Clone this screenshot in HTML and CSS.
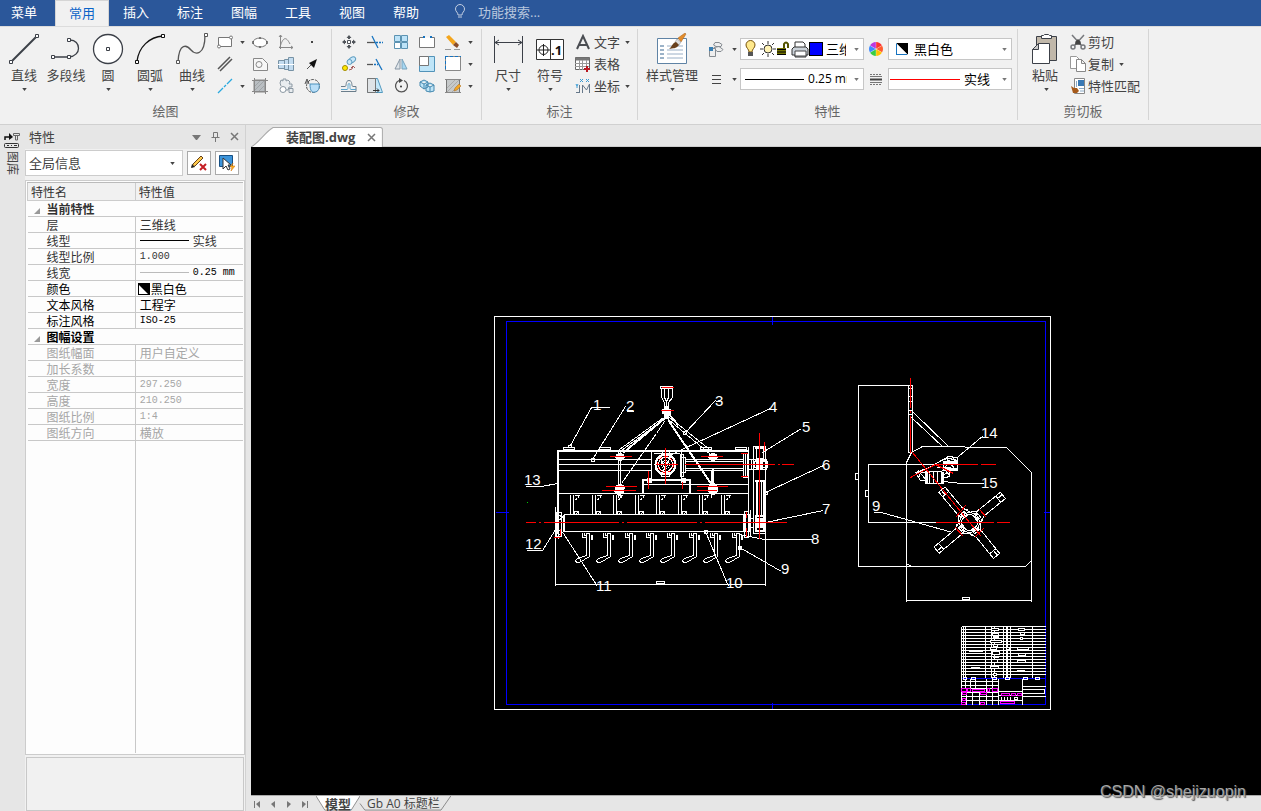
FILE: index.html
```html
<!DOCTYPE html>
<html lang="zh-CN">
<head>
<meta charset="utf-8">
<title>装配图.dwg</title>
<link rel="stylesheet" href="styles.css">
</head>
<body>
<svg class="defs" aria-hidden="true">
  <symbol id="caret" viewBox="0 0 6 4"><path d="M0 0h6L3 4z"/></symbol>
  <symbol id="bw" viewBox="0 0 12 12"><path d="M0 0h12v12z" fill="#000"/><path d="M0 0v12h12z" fill="#fff"/><path d="M.5 12V.5M0 11.500h11" fill="none" stroke="#1673c0"/></symbol>
</svg>

<nav class="menu">
  <button class="first">菜单</button><button class="active">常用</button><button>插入</button><button>标注</button><button>图幅</button><button>工具</button><button>视图</button><button>帮助</button>
  <label class="search">
    <svg width="12" height="16" viewBox="0 0 12 16" fill="none" stroke="#c3cfe2"><path d="M4 11C4 8 1.500 8 1.500 5a4.500 4.500 0 0 1 9 0C10.500 8 8 8 8 11zM4 13h4"/></svg>
    <input type="text" placeholder="功能搜索..." aria-label="功能搜索">
  </label>
</nav>

<header class="ribbon">
  <section class="group">
    <div class="tools draw">
      <div class="bigs">
        <button class="big"><svg viewBox="0 0 32 32" fill="none" stroke="#3c4048"><path d="M4 28 28 4" stroke-width="2"/><path d="M1.500 27.500h3v3h-3zM27.500 1.500h3v3h-3z" fill="#fff"/></svg>直线<svg class="caret"><use href="#caret"/></svg></button>
        <button class="big"><svg viewBox="0 0 32 32" fill="none" stroke="#3c4048"><path d="M3 24h16c13-1 12-17 1-17" stroke-width="1.300"/><path d="M1.500 22.500h3v3h-3zM17.500 22.500h3v3h-3zM17.500 5.500h3v3h-3z" fill="#fff"/></svg>多段线</button>
        <button class="big"><svg viewBox="0 0 32 32" fill="#fff" stroke="#3c4048"><circle cx="16" cy="16" r="14.500" stroke-width="1.300"/><path d="M14.500 14.500h3v3h-3z"/></svg>圆<svg class="caret"><use href="#caret"/></svg></button>
        <button class="big"><svg viewBox="0 0 32 32" fill="none" stroke="#111"><path d="M3 28C5 14 15 4 29 3" stroke-width="1.300"/><path d="M1.500 27.500h3v3h-3zM27.500 1.500h3v3h-3z" fill="#fff"/></svg>圆弧<svg class="caret"><use href="#caret"/></svg></button>
        <button class="big"><svg viewBox="0 0 32 32" fill="none" stroke="#555"><path d="M2 29C3 9 11 12 15 17s14 6 14-15" stroke-width="1.300"/><path d="M.5 27.500h3v3h-3zM28.500.5h3v3h-3z" fill="#fff"/></svg>曲线<svg class="caret"><use href="#caret"/></svg></button>
      </div>
      <div class="smalls draw-grid">
        <button aria-label="矩形"><svg viewBox="0 0 16 16" fill="#fff" stroke="#777"><path d="M1.500 3.500h13v9h-13z"/><circle cx="14" cy="3.500" r="1.500"/><circle cx="2" cy="12.500" r="1.500"/></svg><svg class="caret"><use href="#caret"/></svg></button>
        <button aria-label="椭圆"><svg viewBox="0 0 16 16" fill="#fff" stroke="#777"><ellipse cx="8" cy="8.500" rx="7" ry="4.500"/><path d="M1 7v3M15 7v3M7 4h2M7 13h2" stroke="#333"/></svg></button>
        <button aria-label="公式曲线"><svg viewBox="0 0 16 16" fill="none" stroke="#888"><path d="M2.500 1v14M1 13.500h14M1 3l1.500-2L4 3M13 12l2 1.500-2 1.500M2 13C5 3 8 2 12 10"/></svg></button>
        <button aria-label="点"><svg viewBox="0 0 16 16"><path d="M7 7h2v2H7z" fill="#444"/></svg></button>
        <button aria-label="平行线"><svg viewBox="0 0 16 16" stroke="#555" stroke-width="1.500"><path d="M1 13 13 1M3 15 15 3"/></svg></button>
        <button aria-label="孔"><svg viewBox="0 0 16 16" fill="#f7f7f7" stroke="#888"><path d="M1.500 2.500h9l5 5v7h-14z"/><circle cx="7" cy="8.500" r="3"/></svg></button>
        <button aria-label="轴"><svg viewBox="0 0 16 16" fill="#c3dcf0" stroke="#7792a5"><path d="M.5 4.500h6v8h-6zM6.500 3.500h4v10h-4zM10.500 1.500h5v13h-5z"/><path d="M0 8.500h16" stroke="#fff"/></svg></button>
        <button aria-label="箭头"><svg viewBox="0 0 16 16"><path d="m3 13 6-6" stroke="#555" fill="none"/><path d="m13 3-3 9-5-5z" fill="#111"/></svg></button>
        <button aria-label="构造线"><svg viewBox="0 0 16 16" stroke="#29a9df" stroke-width="1.300"><path d="m1 15 5-5M7 9l2-2M10 6l5-5"/></svg><svg class="caret"><use href="#caret"/></svg></button>
        <button aria-label="剖面线"><svg viewBox="0 0 16 16" fill="none" stroke="#888"><path d="M2 2h11v12H2z" fill="#b9bec2"/><path d="M2.500 0v16M13.500 0v16M0 2.500h16M0 13.500h16"/><path d="M3 8l5-5M3 12l9-9M7 13l6-6" stroke="#a0a5a8"/></svg></button>
        <button aria-label="块"><svg viewBox="0 0 16 16" fill="#e9edf0" stroke="#8b98a3"><path d="m2 5 1-3 2 1V1h3v2l2-1 2 2-1 2h3v3h-3l-1 3H8M2 5l1 3"/><circle cx="5" cy="11.500" r="3" fill="#fff"/><path d="M11 10.500h4v4h-4z"/></svg></button>
        <button aria-label="局部放大"><svg viewBox="0 0 16 16" fill="none" stroke="#555"><circle cx="9" cy="8" r="6.500" stroke-dasharray="3 1"/><path d="M6 6h9c1 4-1 8-4 8-3 1-5-1-5-8z" fill="#b9def7" stroke="#4c91bd"/><path d="m1 6 2-5 2 5M2 4h3"/></svg></button>
      </div>
    </div>
    <h2>绘图</h2>
  </section>

  <section class="group">
    <div class="tools modify">
      <div class="smalls modify-grid">
        <button aria-label="平移"><svg viewBox="0 0 16 16" fill="#50545a"><path d="m8 1 2.500 3h-5zM8 15l2.500-3h-5zM1 8l3-2.500v5zM15 8l-3-2.500v5zM7 4h2v1H7zM7 11h2v1H7zM4 7h1v2H4zM11 7h1v2h-1z"/><path d="M6.500 6.500h3v3h-3z" fill="#fff" stroke="#50545a"/></svg></button>
        <button aria-label="裁剪"><svg viewBox="0 0 16 16" fill="none" stroke-width="1.300"><path d="M0 8.500h8" stroke="#555"/><path d="M9 8.500h7" stroke="#1673c0" stroke-dasharray="2 1"/><path d="m5 2 6 12" stroke="#1673c0"/></svg></button>
        <button aria-label="阵列"><svg viewBox="0 0 16 16" fill="#bde3f8" stroke="#5c93b2"><path d="M1.500 1.500h6v6h-6zM8.500 1.500h6v6h-6zM8.500 8.500h6v6h-6z"/><path d="M1.500 8.500h6v6h-6z" fill="#fff"/></svg></button>
        <button aria-label="打断"><svg viewBox="0 0 16 16" fill="#fff" stroke="#777"><path d="M5 3.500H.5v10h15v-10H11"/><path d="M4 2h2v2H4zM11 2h2v2h-2z" fill="#1673c0" stroke="none"/></svg></button>
        <button aria-label="删除"><svg viewBox="0 0 16 16"><path d="m1 3 3-2 7 7-3 3z" fill="#f4a51c"/><path d="m8 11 3-3 3 3-2 3z" fill="#8b4d28"/><path d="M0 15.500h6M9 15.500h6" stroke="#999"/></svg><svg class="caret"><use href="#caret"/></svg></button>
        <button aria-label="复制图形"><svg viewBox="0 0 16 16" fill="none"><ellipse cx="11" cy="4" rx="4" ry="2.500" transform="rotate(-35 11 4)" fill="#c9e8fa" stroke="#5c9cc0"/><circle cx="8.500" cy="6" r="2.500" fill="#c9e8fa" stroke="#5c9cc0"/><circle cx="4" cy="12" r="2.500" fill="#ffe900" stroke="#a28c00"/><path d="M8 14q4 0 4-4m-2 2 2-2 2 2" stroke="#a55c5c"/></svg></button>
        <button aria-label="延伸"><svg viewBox="0 0 16 16" fill="none" stroke-width="1.300"><path d="M0 8.500h6" stroke="#555"/><path d="M7 8.500h4" stroke="#1673c0" stroke-dasharray="2 1"/><path d="m9 3 6 11" stroke="#1673c0"/></svg></button>
        <button aria-label="镜像"><svg viewBox="0 0 16 16"><path d="M7 3v10H2z" fill="#dfe5ea" stroke="#8796a5"/><path d="M9 3v10h5z" fill="#a6d7f3" stroke="#7aa3bb"/></svg></button>
        <button aria-label="缩放"><svg viewBox="0 0 16 16" stroke="#5293b9"><path d="M.5.5h15v15H.5z" fill="#bfe5f8"/><path d="M.5.5h9v9h-9z" fill="#fff" stroke="#777"/></svg></button>
        <button aria-label="拉伸"><svg viewBox="0 0 16 16" fill="#fff"><path d="M.5.5h15v14H.5z" stroke="#888"/><path d="M0 .5h16M.5 0v15" stroke="#1673c0" stroke-dasharray="3 2"/></svg><svg class="caret"><use href="#caret"/></svg></button>
        <button aria-label="等距线"><svg viewBox="0 0 16 16" fill="none" stroke="#6a7d8b"><path d="M0 8.500h4c2 0 0-6 4-6s2 6 4 6h3v5H0"/><path d="M0 11.500h6c2 0 0-6 2-6s0 6 2 6h5" stroke="#5ba7d0"/></svg></button>
        <button aria-label="拉伸边"><svg viewBox="0 0 16 16"><path d="M.5.500h10l5 14h-15z" fill="#c4e7f9" stroke="#559abf"/><path d="M.5.500h8v14h-8z" fill="#dfe3e6" stroke="#777"/><path d="M6 12.500h6m-2-2 2 2-2 2" fill="none" stroke="#333"/></svg></button>
        <button aria-label="旋转"><svg viewBox="0 0 16 16" fill="none" stroke="#555" stroke-width="1.300"><path d="M6 2.500a6 6 0 1 0 5 0"/><path d="m6 0 4 2.500L6 5z" fill="#444" stroke="none"/><circle cx="8" cy="8.500" r="1" fill="#333" stroke="none"/></svg></button>
        <button aria-label="分解"><svg viewBox="0 0 16 16" fill="#bfe5f8" stroke="#4488af"><path d="m1 4 4-2 4 2v5l-4 2-4-3zM1 4l4 2 4-2M5 6v5M7 7l4-2 4 2v6l-4 1-4-1zM7 7l4 2 4-2M11 9v5"/></svg></button>
        <button aria-label="编辑填充"><svg viewBox="0 0 16 16"><path d="M1.500 1.500h13v13h-13z" fill="#c6c9ca" stroke="#777"/><path d="M0 1.500h16M0 14.500h16" stroke="#888"/><path d="m2 10 8-8M2 14 14 2M7 14l7-7" stroke="#aaa"/><path d="m9 13 1-3 4-4 2 2-4 4z" fill="#f1a526" stroke="#a96a21" stroke-width=".5"/></svg><svg class="caret"><use href="#caret"/></svg></button>
      </div>
    </div>
    <h2>修改</h2>
  </section>

  <section class="group">
    <div class="tools note">
      <div class="bigs">
        <button class="big"><svg viewBox="0 0 32 32" fill="none" stroke="#3c4048"><path d="M2.500 3v27M30.500 3v27M3 9.500h27M7 7 3 9.500 7 12M26 7l4 2.500-4 2.500"/></svg>尺寸<svg class="caret"><use href="#caret"/></svg></button>
        <button class="big"><svg viewBox="0 0 32 32" fill="none" stroke="#222"><path d="M2.500 6.500h27v20h-27zM16.500 6.500v20" fill="#fff" stroke="#333"/><circle cx="9.500" cy="17" r="4.500"/><path d="M3 17h13M9.500 11v12"/><text x="17" y="22" class="icon-text">.1</text></svg>符号<svg class="caret"><use href="#caret"/></svg></button>
      </div>
      <div class="labelled">
        <button><svg viewBox="0 0 16 16" fill="none" stroke="#4a4d52" stroke-width="2"><path d="M2 15 8 2l6 13M4 11h8"/></svg>文字<svg class="caret"><use href="#caret"/></svg></button>
        <button><svg viewBox="0 0 16 16"><path d="M.5 1.500h14v12H.5z" fill="#fff" stroke="#666"/><path d="M.5 1.500h14v3H.5z" fill="#777"/><path d="M0 7.500h14M0 10.500h14M4.500 4v10M7.500 4v10M11.500 4v10" stroke="#999"/><path d="M9 13h6M12 10v6" stroke="#b91922" stroke-width="2"/></svg>表格</button>
        <button><svg viewBox="0 0 16 16" fill="none" stroke="#66788a"><path d="M4.500 7v8M1 14.500h3M7.500 15V7l4 5 3-6v9"/><path d="m5 1 3 3M8 1 5 4M11 1l3 3M14 1l-3 3M1 6l1 2 1-2M2 8v2" stroke="#389bd5"/></svg>坐标<svg class="caret"><use href="#caret"/></svg></button>
      </div>
    </div>
    <h2>标注</h2>
  </section>

  <section class="group">
    <div class="tools props">
      <button class="big wide"><svg viewBox="0 0 32 32"><path d="M1.500 5.500h29v25h-29z" fill="#fff" stroke="#5f83a5"/><path d="M4 13h4M4 17h4M4 21h4M4 25h4" stroke="#386791"/><path d="M11 13h16M11 17h16M11 21h16M11 25h16" stroke="#9aafc6"/><path d="m22 5 7-5 1 1-5 8z" fill="#e28c2b" stroke="#a5601a" stroke-width=".5"/><path d="m21 6 4 3-2 3-4-3z" fill="#ddd" stroke="#888" stroke-width=".5"/><path d="M13 16c3-2 3-6 7-7l3 3c-3 4-6 3-10 4z" fill="#68401c"/></svg>样式管理<svg class="caret"><use href="#caret"/></svg></button>
      <div class="prop-grid">
        <button aria-label="图层"><svg viewBox="0 0 16 16" fill="#eee" stroke="#858b91"><path d="M5.500 4 7 1.500h4l3 2-1 2H8z"/><path d="m6 6.500 5-1 4 3-2 2H9z"/><path d="M1.500 7.500h6v8h-6z"/><path d="M1 6h4v4H1z" fill="#397fb3" stroke="none"/></svg><svg class="caret"><use href="#caret"/></svg></button>
        <div class="combo layer">
          <svg width="64" height="18" viewBox="0 0 64 18"><path d="M4 12C4 9 1 8 1 5a4.500 4.500 0 0 1 9 0c0 3-3 4-3 7z" fill="#ffe98c" stroke="#77520c"/><path d="M3 12h5v4H3z" fill="#555"/><circle cx="23" cy="9" r="4" fill="#fff3b5" stroke="#333"/><path d="M23 1v3M23 14v3M15 9h3M28 9h3M17 3l2 2M27 13l2 2M29 3l-2 2M19 13l-2 2" stroke="#333"/><path d="M32 8h9v7h-9z" fill="#737300"/><path d="M32 9.500h9M32 12h9M32 14.500h9" stroke="#000"/><path d="M39 8V4q2-3 4 0v4" stroke="#555500" stroke-width="2" fill="none"/><path d="M50 7V2h8l2 2v3" fill="#fff" stroke="#333"/><path d="m49 7-2 2v6h3v2h11v-2h2V9l-2-2z" fill="#cbd2d9" stroke="#333"/><path d="M50 11h11v5H50z" fill="#fff" stroke="#444"/></svg>
          <span class="swatch"></span>
          <select class="clipped" aria-label="图层"><option>三维线</option></select><svg class="caret"><use href="#caret"/></svg>
        </div>
        <svg class="wheel" viewBox="0 0 16 16"><path d="M8 8V1a7 7 0 0 1 6 3.500z" fill="#f33"/><path d="m8 8 6-3.500a7 7 0 0 1 0 7z" fill="#ff5c2e"/><path d="m8 8 6 3.500A7 7 0 0 1 8 15z" fill="#ffc400"/><path d="M8 8v7a7 7 0 0 1-6-3.500z" fill="#39cd42"/><path d="m8 8-6 3.500a7 7 0 0 1 0-7z" fill="#3d8aff"/><path d="M8 8 2 4.500A7 7 0 0 1 8 1z" fill="#bd38df"/><path d="M8 1v14M2 4.500l12 7M14 4.500l-12 7" stroke="#fff" stroke-width=".3"/></svg>
        <div class="combo spaced"><svg width="12" height="12"><use href="#bw"/></svg><select aria-label="颜色"><option>黑白色</option></select><svg class="caret"><use href="#caret"/></svg></div>
        <button aria-label="线宽"><svg viewBox="0 0 16 16" stroke="#444"><path d="M4 4.500h9M4 8.500h9M4 12.500h9"/></svg><svg class="caret"><use href="#caret"/></svg></button>
        <div class="combo"><span class="line black"></span><select class="weight" aria-label="线宽"><option>0.25 mm</option></select><svg class="caret"><use href="#caret"/></svg></div>
        <svg class="wheel" viewBox="0 0 16 16" stroke="#777" fill="none"><path d="M2 3.500h12M2 13.500h12" stroke-dasharray="2 1"/><path d="M2 5.500h12M2 11.500h12"/><path d="M2 8.500h12" stroke-width="2" stroke="#444"/></svg>
        <div class="combo tight"><span class="line red-line"></span><select class="linetype" aria-label="线型"><option>实线</option></select><svg class="caret"><use href="#caret"/></svg></div>
      </div>
    </div>
    <h2>特性</h2>
  </section>

  <section class="group">
    <div class="tools clip">
      <button class="big"><svg viewBox="0 0 32 32" stroke="#3c4048"><path d="M7.500 3.500h20v24h-20z" fill="#c1b8aa"/><path d="M12.500 5.500v-3h2l1-1h4l1 1h2v3z" fill="#fff"/><path d="M9.500 10.500h11v20h-17v-14z" fill="#fff"/><path d="M9.500 10.500v6h-6z" fill="#ccc"/></svg>粘贴<svg class="caret"><use href="#caret"/></svg></button>
      <div class="labelled">
        <button><svg viewBox="0 0 16 16" fill="none" stroke="#77797d" stroke-width="1.500"><path d="m2 1 10 11M14 1 4 12"/><path d="m6 8 2-2 2 2v2H6z" fill="#444" stroke="#444"/><circle cx="3" cy="13" r="2"/><circle cx="13" cy="13" r="2"/></svg>剪切</button>
        <button><svg viewBox="0 0 16 16" fill="#fff" stroke="#999"><path d="M.5.500h6l3 3v9h-9z"/><path d="M6.500 3.500h5l4 4v8h-9zM11.500 3.500v4h4" stroke="#888"/></svg>复制<svg class="caret"><use href="#caret"/></svg></button>
        <button><svg viewBox="0 0 16 16"><path d="M4.500.5h10v15h-10z" fill="#fff" stroke="#888"/><path d="M8 2h6v6H8z" fill="#3979b5"/><path d="M6.500 3v6M9 10.500h5M10 13h4" stroke="#8baac7"/><path d="m1 8 3 2 3 0 2 3-2 2-4 0z" fill="#a65a1b"/></svg>特性匹配</button>
      </div>
    </div>
    <h2>剪切板</h2>
  </section>
</header>

<main>
  <aside class="strip">
    <button><svg width="16" height="17" viewBox="0 0 16 17" fill="none" stroke="#333"><path d="M1 8V5h6" stroke="#111" stroke-width="1.500"/><path d="m5 1 4 4-4 3z" fill="#111" stroke="none"/><path d="M9.500 1.500h6v2h-6zM11.500 4v4h2V4" stroke="#666"/><rect x=".5" y="11.500" width="14" height="4" rx="1"/><path d="M3 13.500h2M7 13.500h1M10 13.500h3"/></svg><span>图库</span></button>
  </aside>

  <aside class="panel">
    <div class="panel-title"><h1>特性</h1>
      <button aria-label="选项"><svg viewBox="0 0 10 10"><path d="M1 3h9L6 8H5z" fill="#777"/></svg></button>
      <button aria-label="固定"><svg viewBox="0 0 10 10" fill="none" stroke="#777"><path d="M3.500.5h4v5h-4zM1.500 5.500h8M5.500 6v4"/></svg></button>
      <button aria-label="关闭"><svg viewBox="0 0 10 10" stroke="#777" stroke-width="1.500"><path d="m2 1 7 7M9 1 2 8"/></svg></button>
    </div>
    <div class="panel-tools">
      <div class="scope"><select aria-label="对象"><option>全局信息</option></select><svg class="caret"><use href="#caret"/></svg></div>
      <button aria-label="清除选择"><svg viewBox="0 0 16 16"><path d="m1 12 1-3 8-8 2 2-8 8z" fill="#ffc94b" stroke="#654119"/><path d="m0 13 1-4 3 3z" fill="#222"/><path d="m9 9 6 6M15 9l-6 6" stroke="#c51e25" stroke-width="2"/></svg></button>
      <button aria-label="快速选择"><svg viewBox="0 0 16 16"><path d="M.5.500h13v11H.5z" fill="#3c94da" stroke="#174f83"/><path d="M4 3v11l3-3 2 4 2-1-2-4h3z" fill="#fff" stroke="#333"/><path d="m14 8-3 4h2l-1 4 4-5h-3z" fill="#ffb41f" stroke="#d06c00" stroke-width=".5"/></svg></button>
    </div>
    <div class="grid-wrap">
      <table>
        <thead><tr><th>特性名</th><th>特性值</th></tr></thead>
        <tbody>
          <tr class="cat grey"><th colspan="2"><svg viewBox="0 0 6 6"><path d="M6 0v6H0z"/></svg>当前特性</th></tr>
          <tr class="grey"><td>层</td><td>三维线</td></tr>
          <tr class="grey"><td>线型</td><td><div class="val"><i class="sample dark"></i>实线</div></td></tr>
          <tr class="grey"><td>线型比例</td><td class="num">1.000</td></tr>
          <tr class="grey"><td>线宽</td><td><div class="val num strong"><i class="sample"></i>0.25 mm</div></td></tr>
          <tr><td>颜色</td><td class="color"><div class="val"><svg width="12" height="12" viewBox="0 0 12 12"><path d="M0 0h12v12H0z"/><path d="M1 2v9h9z" fill="#fff"/></svg>黑白色</div></td></tr>
          <tr><td>文本风格</td><td>工程字</td></tr>
          <tr><td>标注风格</td><td class="num">ISO-25</td></tr>
          <tr class="cat"><th colspan="2"><svg viewBox="0 0 6 6"><path d="M6 0v6H0z"/></svg>图幅设置</th></tr>
          <tr class="off"><td>图纸幅面</td><td>用户自定义</td></tr>
          <tr class="off"><td>加长系数</td><td></td></tr>
          <tr class="off"><td>宽度</td><td class="num">297.250</td></tr>
          <tr class="off"><td>高度</td><td class="num">210.250</td></tr>
          <tr class="off"><td>图纸比例</td><td class="num">1:4</td></tr>
          <tr class="off"><td>图纸方向</td><td>横放</td></tr>
          <tr class="fill"><td></td><td></td></tr>
        </tbody>
      </table>
    </div>
    <div class="hint"></div>
  </aside>

  <section class="work">
    <div class="doc-tabs">
      <div class="doc-tab"><svg class="edge" viewBox="0 0 132 20" preserveAspectRatio="none"><path d="M0 20C8 16 14 5 22 .500h107q2 0 2 2V20" fill="#fff" stroke="#aaa"/></svg><span>装配图.dwg</span><button aria-label="关闭"><svg viewBox="0 0 10 10" stroke="#777" stroke-width="1.500"><path d="m1 2 7 7M8 2 1 9"/></svg></button></div>
    </div>
    <div class="canvas">
      <svg class="drawing" viewBox="251 147 1010 648" preserveAspectRatio="xMidYMid meet">
        <defs>
          <g id="hanger"><path d="M0 0v20M3 0v20M4 1h5l-2 3-2 1M4 17h4v3H4zM5 20l3-3"/></g>
          <g id="blade"><path d="M-3 1h4M1 0v24l-10 6h-3l-1-2 2-2 9-3V1M-6 0v5h4M-4 0v3h2M3 2v5h1V2"/></g>
          <g id="leg"><path d="M-3-9-4-15V-43H4V-15L7-10M-4-37H4M-1-37V-43M-3-12h6v5h-6z"/><circle r="2" cy="-10"/><path d="M-8-8l4-5M8-8l-3-3"/></g>
          <g id="bolt"><path d="M-3-2h6v4h-6zM-5 0h10M-1-4v8M1-4v8" stroke-width="2"/></g>
        </defs>
        <g transform="translate(.5 .5)" class="wire">
          <g class="blue"><path d="M506 321H1045V704H506zM495 512h13M1043 512h7M772 316v8M772 702v7"/></g>
          <path d="M494 316H1050V709H494z"/>

          <path d="M591 407h18M591 407 570 445M625 406 592 459M626 411h7M525 486h16l16-3M526 550h16l15-24M563 533l34 53M715 400l-30 32M770 408l-82 38-19 9M801 428l-39 24M823 465l-58 27M823 510l-58 12M811 539h-47l-25-5M781 571l-42-24M705 531l23 55M719 401h-4M983 435l-25 21M983 483h-22l-18-2M873 512h8l71 20"/>
          <path d="M591 458h3v3h-3zM683 431h3v3h-3zM704 530h3v3h-3zM738 546h3v3h-3zM763 491h4v3h-4z"/>

          <path d="M557 450H748M557 449V533" stroke-width="2"/>
          <path d="M563 447h11v2h-11zM568 445h3v2h-3zM599 447h11v2h-11zM700 447h11v2h-11zM735 447h11v2h-11z"/>
          <path d="M558 459h93M558 464h93M558 470h93M557 493H748M641 484H748M564 514H745V531H564zM555 506V585M765 446V585M555 584H765M656 581h8v2h-8zM748 446V510"/>
          <path d="M563 514V531" stroke-width="2"/>
          <path d="M642 493V479H689V493" stroke-width="2"/>
          <path d="M651 451h30v28h-30zM653 453h26"/>
          <circle cx="665" cy="464" r="10" stroke-width="2"/><circle cx="665" cy="464" r="7"/><circle cx="665" cy="464" r="4"/><circle cx="665" cy="464" r="2"/>
          <path d="M656 459l4-2 2-5M669 452l2 5 4 2M675 469l-4 2-2 5M661 476l-2-5-4-2M660 457l5 14M670 457l-8 14M661 453h8v4h-8zM661 472h8v4h-8z"/>
          <path d="M680 454h3v22h-3zM683 457v18M685 459h58v11h-58zM685 461h58M685 468h58M743 453h4v24h-4zM745 453v24M680 457h5v15h-5M748 459h5v10h-5"/>

          <path d="M660 386h12v2h-12zM661 388v9l3 5v5M672 388v9l-4 5v5M664 388v9l2 4 2-4v-9M666 401v10"/>
          <path d="M662 409h8v4h-8zM664 406h4v12h-4z" fill="#fff"/>
          <path d="M663 417 619 449M663 419 621 450M664 421l-8 12-35 50M669 417l44 35M668 419l42 35"/>
          <path d="M668 420l43 64M668 413l10 12M664 418l-41 34" stroke-width="2"/>
          <path d="M618 450v47M620 450v47M711 470v27"/><path d="M712 468v16" stroke-width="2"/>
          <use href="#bolt" x="619" y="456"/><use href="#bolt" x="712" y="456"/><use href="#bolt" x="618" y="490"/><use href="#bolt" x="712" y="490"/><use href="#bolt" x="712" y="486"/><use href="#bolt" x="619" y="487"/>
          <path d="M647 478h4v4h-4zM681 478h4v4h-4zM616 487h7v5h-7zM708 487h9v4h-9z" fill="#fff"/>

          <use href="#hanger" x="570" y="494"/><use href="#hanger" x="592" y="494"/><use href="#hanger" x="613" y="494"/><use href="#hanger" x="635" y="494"/><use href="#hanger" x="656" y="494"/><use href="#hanger" x="678" y="494"/><use href="#hanger" x="699" y="494"/><use href="#hanger" x="721" y="494"/>
          <use href="#blade" x="588" y="532"/><use href="#blade" x="609" y="532"/><use href="#blade" x="631" y="532"/><use href="#blade" x="652" y="532"/><use href="#blade" x="673" y="532"/><use href="#blade" x="695" y="532"/><use href="#blade" x="716" y="532"/><use href="#blade" x="738" y="532"/>

          <path d="M556 512h5v24h-5zM558 512v26M561 516h2v13M558 514l4 3-4 3M558 529l4 3-4 3M743 514h6v17h-6zM744 511h4v26h-4zM750 509v27M750 518h3v9h-3"/>
          <path d="M753 446h12v87h-12zM756 448h7v10h-7z"/>
          <path d="M754 447h11M754 460h11M754 480h11M754 515h11M754 530h11M756 481v33M763 481v33M755 515v15M763 515v15" stroke-width="2"/>
          <path d="M759 481v33M761 481v33M751 459h15v10h-15zM754 461h13v6h-13z"/>
          <path d="M756 460h6v9h-6zM756 518h6v9h-6z" fill="#fff"/>

          <path d="M911 385H858V566H1025L1031 560V472L1006 447H966L963 446H922L911 452 906 462V601M1031 472V601M906 600H1031M962 597h7v2h-7zM855 473h3v6h-3zM865 490h3v6h-3zM935 464H868V522H935M906 563l5 3M857 385h3M857 566h3M867 464h3M867 522h3"/>
          <path d="M908 385h4v67h-4zM908 388h4M908 396h4M908 401h4M908 410h4v4h-4M912 411l36 35M911 417l31 29"/>
          <path d="M934 464l14-8 9 1v13h-8l-6 5M934 464l9-5 6-1 8 2M943 461h14v9h-14zM915 472l14-5 5-3h9M915 472l5 8h5v-8zM925 471h16v12h-16zM929 471v12M933 471v12M937 471v12M941 470h8v6l-8 2M918 470l7 9M946 458l8 10M951 456l6 7M949 460l-5 8M936 467h14M946 471l4 5M920 471l-1 6"/>
          <path d="M926 471v12M942 471v12M943 462h14M943 468h14" stroke-width="2"/>
          <circle cx="969" cy="522" r="10"/><circle cx="969" cy="522" r="8"/>
          <use href="#leg" transform="translate(969 522) rotate(-40)"/>
          <use href="#leg" transform="translate(969 522) rotate(51)"/>
          <use href="#leg" transform="translate(969 522) rotate(141)"/>
          <use href="#leg" transform="translate(969 522) rotate(230)"/>

          <g class="red">
            <path d="M525 522h10M538 522h2M543 522h75M621 522h2M626 522h70M699 522h2M704 522h82M661 387h12M660 410h13M609 456h22M605 486h31M601 490h34M648 470v18M682 481v7M665 447v36M655 464h22M700 456h22M696 486h31M696 490h20M684 464h90M777 464h2M781 464h12M759 432v106M764 441v9M740 453h7M740 476h7M553 537h6"/>
            <circle cx="665" cy="464" r="8" stroke-dasharray="4 2"/>
            <path d="M746 511v6M746 527v9M560 528v7"/>
            <path d="M910 377v30M910 410v2M910 415v37M912 452l57 70 12 14M910 477l25-13M935 464h42M980 464h15M935 464l18 9M935 522h58M996 522h13M955 517l10-12M979 509l7 8M955 527l8 9M974 537l9-9"/>
          </g>

          <g class="title">
            <path d="M961 626h84M961 629h84M961 632h84M961 635h84M961 638h84M961 641h84M961 644h84M961 647h84M961 650h84M961 653h84M961 656h84M961 659h84M961 662h84M961 665h84M961 668h84M961 671h84M961 674h84M961 626v78M963 626v52M965 626v52M985 626v52M991 626v52M994 626v52M1003 626v52M1006 626v52M1007 626v52M1010 626v52M1032 626v52"/>
            <g fill="#000" stroke="#fff"><path d="M991 628h7v2h-7zM992 633h6v2h-6zM990 640h11v2h-11zM993 644h4v2h-4zM990 647h6v2h-6zM992 651h7v3h-7zM991 659h6v3h-6zM990 666h8v2h-8zM993 673h3v2h-3zM969 650h13v1h-13zM1018 628h6v2h-6zM1020 632h4v2h-4zM1020 637h2v2h-2zM1017 647h11v2h-11zM1018 653h7v2h-7zM1017 660h8v2h-8zM1006 647h3v2h-3zM1017 670h7v1h-7z"/></g>
            <path d="M970 667h9M1018 670h6M992 636h6M992 656h6" stroke-width="2"/>
            <g class="blue"><path d="M961 678h84M1039 704h6"/></g>
            <path d="M961 681h37M961 685h37M961 688h37M961 692h37M961 696h37M961 700h37M965 678v10M970 678v10M975 678v10M986 678v26M992 678v26M966 692v12M972 692v12M979 692v12M998 678v26M998 691h24M998 695h24M998 700h24M1022 678v26M1022 686h23M1022 689h22v4h-22M1022 696h23M1001 696v4M1004 696v4M1007 696v4M1010 696v4M1014 697h3v2h-3zM963 677h3v2h-3zM971 677h4v2h-4zM992 677h4v2h-4zM1005 677h4v2h-4zM1023 677h4v2h-4zM1035 677h4v2h-4z"/>
            <g class="magenta"><path d="M961 688h5v3h-5zM967 688h3v3h-3zM972 689h12v2h-12zM992 688h5v3h-5zM987 688h2v3h-2zM962 692h4v2h-4zM980 692h6v2h-6zM962 698h3v2h-3zM961 702h4v2h-4zM980 702h4v2h-4zM1001 693h8v2h-8zM1011 693h4v2h-4zM1017 693h4v2h-4zM1000 701h14v2h-14z"/></g>
          </g>
        </g>
        <g class="callouts">
          <text x="593" y="410">1</text><text x="626" y="411">2</text><text x="715" y="406">3</text><text x="769" y="412">4</text><text x="802" y="432">5</text><text x="822" y="470">6</text><text x="822" y="514">7</text><text x="811" y="544">8</text><text x="781" y="574">9</text><text x="726" y="588">10</text><text x="596" y="591">11</text><text x="525" y="549">12</text><text x="524" y="485">13</text><text x="981" y="438">14</text><text x="981" y="488">15</text><text x="872" y="511">9</text>
        </g>
        <path d="M527 502h1v1h-1z" fill="#0c0"/>
      </svg>
    </div>
    <footer>
      <div class="nav-arrows">
        <button aria-label="最前"><svg viewBox="0 0 8 8"><path d="M1 1h1v7H1zM7 1v7L3 4z"/></svg></button>
        <button aria-label="向前"><svg viewBox="0 0 8 8"><path d="M6 1v7L2 4z"/></svg></button>
        <button aria-label="向后"><svg viewBox="0 0 8 8"><path d="M2 1v7l4-4z"/></svg></button>
        <button aria-label="最后"><svg viewBox="0 0 8 8"><path d="M6 1h1v7H6zM1 1v7l4-4z"/></svg></button>
      </div>
      <button class="sheet on"><svg class="edge" viewBox="0 0 50 16" preserveAspectRatio="none"><path d="m0 0 10 15h30L50 0" fill="#fff" stroke="#888"/></svg><span>模型</span></button>
      <button class="sheet next"><svg class="edge" viewBox="0 0 96 16" preserveAspectRatio="none"><path d="m2 8 5 7h78L95 0" fill="none" stroke="#888"/></svg><span>Gb A0 标题栏</span></button>
    </footer>
  </section>
</main>
<div class="mark">CSDN @shejizuopin</div>
</body>
</html>
```
FILE: styles.css
```css
* { box-sizing: border-box; }
body {
  margin: 0; height: 100vh; display: flex; flex-direction: column; overflow: hidden;
  background: #e6e6e6; color: #444;
  font: 13px/18px "Open Sans", "Noto Sans CJK SC", sans-serif;
}
button, select, input { font: inherit; color: inherit; border: 0; padding: 0; margin: 0; background: none; border-radius: 0; }
h1, h2 { margin: 0; font: inherit; }
svg { display: block; flex: none; }
select { appearance: none; outline: 0; min-width: 0; flex: 1; }
.defs { position: absolute; width: 0; height: 0; }
.caret { width: 5px; height: 3px; fill: #444; }

.menu { display: flex; height: 26px; flex: none; background: #2b579a; color: #fff; }
.menu button { width: 54px; padding-bottom: 2px; }
.menu .first { width: 55px; padding-right: 7px; }
.menu .active { background: #f1f1f1; color: #0a64c8; border: 1px solid #d5d5d5; border-bottom: 0; }
.search { display: flex; align-items: center; gap: 12px; margin-left: 21px; padding-bottom: 2px; color: #c3cfe2; }
.search input { width: 120px; outline: 0; }
.search input::placeholder { color: #b9c7de; opacity: 1; }

.ribbon { display: flex; flex: none; background: #f1f1f1; border-top: 1px solid #dcdcdc; border-bottom: 1px solid #d0d0d0; padding: 2px 0 4px; }
.group { border-right: 1px solid #d5d5d5; display: flex; flex-direction: column; }
.group h2 { text-align: center; color: #666; line-height: 18px; }
.tools { display: flex; height: 73px; padding-top: 2px; }
.draw { padding: 2px 1px 0 3px; }
.bigs { display: flex; }
.big { width: 42px; display: flex; flex-direction: column; align-items: center; white-space: nowrap; padding-top: 2px; line-height: 20px; }
.big > svg:first-child { width: 32px; height: 32px; }
.big .caret { margin-top: 3px; }
.icon-text { font: bold 13px "Open Sans", sans-serif; fill: #111; stroke: none; }
.smalls { display: grid; grid-auto-rows: 22px; }
.smalls button { display: flex; align-items: center; gap: 7px; }
.smalls button > svg:first-child, .labelled button > svg:first-child, .prop-grid button > svg:first-child { width: 16px; height: 16px; }
.draw-grid { grid-template-columns: 35px 26px 26px 26px; padding-left: 4px; }
.modify { padding: 2px 0 0 9px; }
.modify-grid { grid-template-columns: 26px 26px 26px 26px 36px; }
.note { padding: 2px 7px 0 5px; }
.labelled { display: grid; grid-auto-rows: 22px; padding-left: 4px; }
.labelled button { display: flex; align-items: center; gap: 3px; white-space: nowrap; }
.labelled .caret { margin-left: 2px; }

.props { padding: 2px 5px 0 4px; }
.wide { width: 60px; }
.prop-grid { display: grid; grid-template-columns: 38px 124px 24px 124px; grid-auto-rows: 30px; align-items: center; padding-top: 3px; }
.prop-grid > button { display: flex; align-items: center; justify-content: flex-end; gap: 8px; padding-right: 3px; }
.combo { display: flex; align-items: center; height: 22px; background: #fff; border: 1px solid #c6c6c6; padding: 0 4px; color: #000; }
.combo .caret { fill: #777; margin-left: auto; }
.swatch { flex: none; width: 14px; height: 14px; background: #00f; border: 1px solid #000; }
.clipped { margin: 0 8px 0 3px; overflow: hidden; text-overflow: clip; }
.spaced { padding-left: 7px; }
.spaced select { margin-left: 6px; }
.line { flex: none; height: 1px; }
.black { width: 59px; background: #000; }
.red-line { width: 70px; background: #f00; }
.weight { margin: 0 7px 0 4px; font-size: 12px; text-overflow: clip; }
.linetype { margin-left: 4px; }
.tight { padding-left: 1px; }
.wheel { width: 16px; height: 16px; justify-self: center; }
.clip { padding: 2px 8px 0 6px; }
.clip .labelled { padding-left: 4px; }
.clip .labelled button { gap: 2px; }
.clip .caret { margin-left: 3px; }

main { flex: 1; display: flex; min-height: 0; }
.strip { width: 25px; flex: none; padding: 7px 0 0 4px; }
.strip button { display: flex; flex-direction: column; align-items: center; gap: 2px; width: 16px; }
.strip span { writing-mode: vertical-rl; text-orientation: sideways; font-size: 12px; line-height: 16px; }
.panel { width: 221px; flex: none; display: flex; flex-direction: column; border-right: 1px solid #d2d2d2; background: #f1f1f1; }
.panel-title { display: flex; align-items: center; gap: 9px; height: 24px; padding: 0 6px 0 4px; background: #e6e6e6; }
.panel-title h1 { flex: 1; }
.panel-title button svg, .doc-tab button svg { width: 10px; height: 10px; }
.panel-tools { display: flex; align-items: center; gap: 4px; padding: 1px 6px 2px 0; }
.scope { flex: 1; display: flex; align-items: center; height: 26px; padding: 0 7px 0 3px; background: #fff; border: 1px solid #ccc; }
.panel-tools button { width: 24px; height: 24px; background: #fff; border: 1px solid #aaa; display: grid; place-items: center; }
.panel-tools button svg { width: 16px; height: 16px; }
.grid-wrap { flex: 1; min-height: 0; border: 1px solid #ccc; background: #fdfdfd; margin-top: 2px; padding: 1px; }
table { width: 100%; height: 100%; table-layout: fixed; border-collapse: collapse; font: 12px/14px "Noto Sans CJK SC", sans-serif; color: #000; }
th { font-weight: normal; text-align: left; padding: 0 3px; }
thead th { height: 18px; background: #f1f1f1; border: 1px solid #ccc; border-top-color: #bbb; border-right: 0; color: #333; }
tbody tr { height: 16px; border-bottom: 1px solid #c8c8c8; }
tbody td { height: 16px; padding: 0 4px; white-space: nowrap; overflow: hidden; }
tbody td:first-child { padding-left: 19px; border-right: 1px solid #c8c8c8; }
.cat th { font-weight: bold; padding-left: 6px; }
.cat svg { display: inline-block; width: 6px; height: 6px; margin-right: 7px; fill: #999; }
tbody .grey { color: #333; }
tbody .off { color: #a6a6a6; }
tbody .fill { height: auto; border-bottom: 0; }
.fill td { height: auto; }
.num { font: 10px/14px "Liberation Mono", monospace; }
.val { display: flex; align-items: center; gap: 4px; height: 14px; }
.strong { color: #000; }
.sample { width: 49px; height: 1px; background: #bbb; flex: none; }
.dark { background: #000; }
tbody .color { padding-left: 2px; }
.color .val { gap: 1px; }
.hint { height: 54px; border: 1px solid #c8c8c8; margin: 2px 1px 0; }

.work { flex: 1; min-width: 0; display: flex; flex-direction: column; margin-left: 5px; }
.doc-tabs { display: flex; height: 22px; flex: none; align-items: flex-end; border-bottom: 1px solid #ccc; }
.doc-tab { position: relative; display: flex; align-items: center; gap: 12px; height: 20px; padding: 0 6px 0 35px; margin-bottom: -1px; font-weight: bold; }
.edge { position: absolute; inset: 0; width: 100%; height: 100%; }
.doc-tab span, .doc-tab button, .sheet span { position: relative; }
.canvas { flex: 1; min-height: 0; background: #000; }
.drawing { width: 100%; height: 100%; }
.wire { fill: none; stroke: #fff; shape-rendering: crispEdges; }
.blue { stroke: #00f; }
.red { stroke: #f00; }
.magenta { stroke: #f0f; }
.callouts { fill: #fff; font: 15px "Liberation Sans", Arial, sans-serif; }
footer { display: flex; height: 16px; flex: none; border-top: 1px solid #aaa; }
.nav-arrows { display: flex; align-items: center; gap: 8px; padding-left: 2px; }
.nav-arrows svg { width: 8px; height: 8px; fill: #777; }
.sheet { position: relative; line-height: 14px; }
.on { font-weight: bold; margin-left: 7px; padding: 0 9px; z-index: 1; }
.next { margin-left: -2px; padding: 0 12px 0 9px; font-size: 12px; }
.mark { position: absolute; right: 15px; bottom: 9px; font: 16px/20px "Liberation Sans", Arial, sans-serif; color: #a6a6a6; text-shadow: 1px 1px 1px #555; }
```
